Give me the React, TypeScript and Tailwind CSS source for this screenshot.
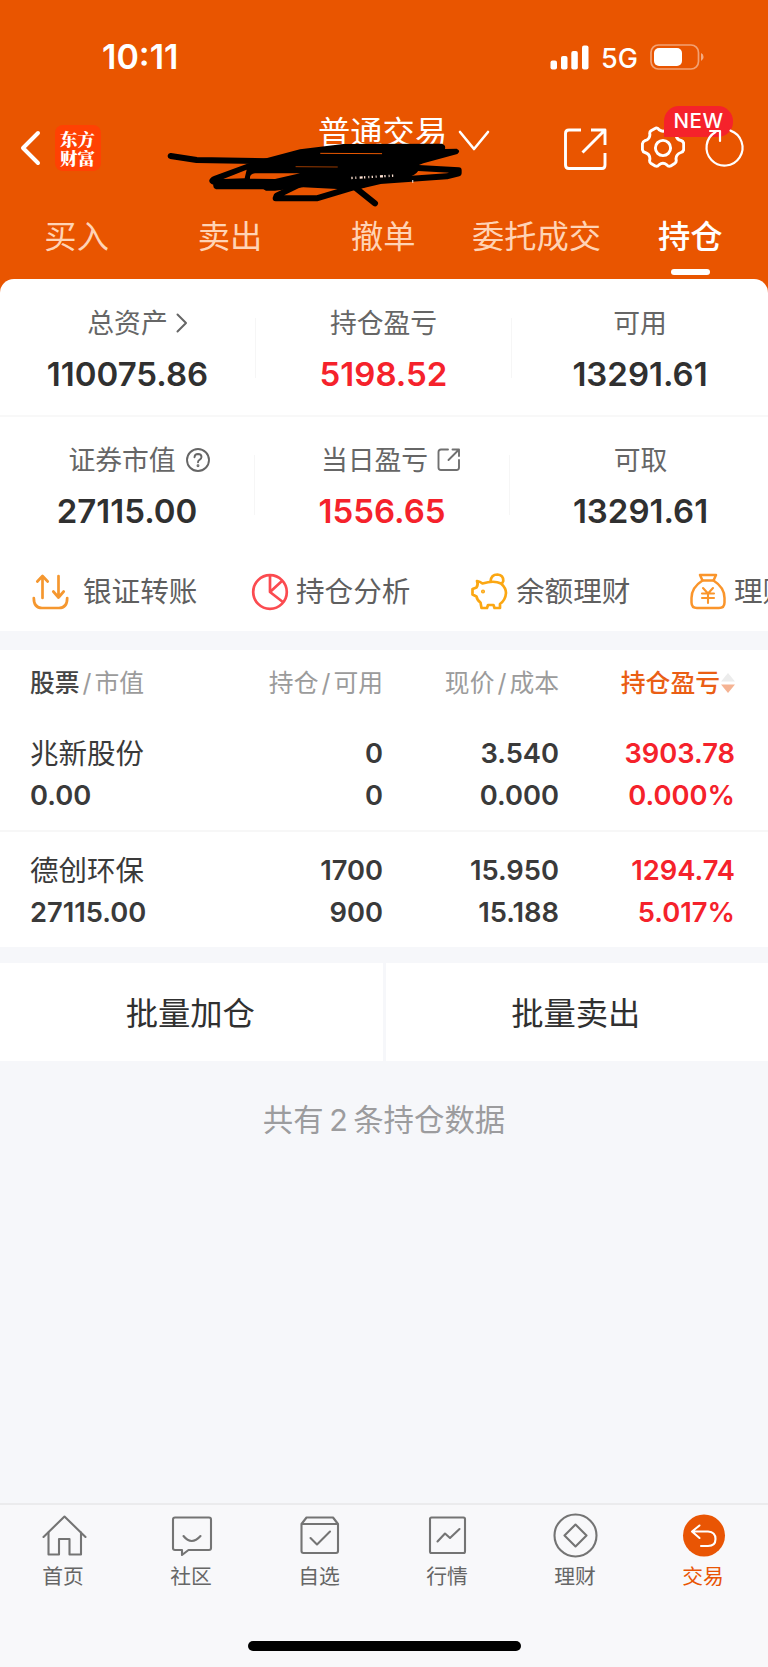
import type { ReactNode } from "react";

const RED = "text-[#f5222b]";

function StatusBar() {
  return (
    <div className="flex h-[114px] items-center justify-between pl-[102px] pr-[64px] text-white">
      <span className="text-[34px] font-semibold leading-none">10:11</span>
      <div className="flex items-center">
        <svg width="39" height="25" viewBox="0 0 39 25" fill="#fff">
          <rect x="0.5" y="15.5" width="6.5" height="9" rx="2" />
          <rect x="11" y="11" width="6.5" height="13.5" rx="2" />
          <rect x="21.3" y="6" width="6.5" height="18.5" rx="2" />
          <rect x="32" y="0.5" width="6.5" height="24" rx="2" />
        </svg>
        <span className="ml-[12px] mt-[2px] w-[37px] text-[27px] font-medium leading-none">5G</span>
        <svg className="ml-[12px]" width="54" height="26" viewBox="0 0 54 26">
          <rect x="1" y="1" width="47.5" height="24" rx="7.5" fill="none" stroke="#fff" strokeOpacity="0.45" strokeWidth="1.7" />
          <rect x="4" y="4" width="28" height="18" rx="5" fill="#fff" />
          <path d="M51 9 q2.6 1.2 2.6 4 t-2.6 4z" fill="#fff" fillOpacity="0.5" />
        </svg>
      </div>
    </div>
  );
}

function Scribble() {
  return (
    <svg className="absolute left-[160px] top-[100px]" width="340" height="120" viewBox="0 0 1020 360" fill="none" stroke="#000" strokeWidth="18" strokeLinecap="round" strokeLinejoin="round">
      <path d="M32 168 L110 180 L330 184" />
      <path
        fill="#000"
        stroke="none"
        fillRule="evenodd"
        d="M148 240 Q152 230 170 225 L270 188 L420 148 L550 132 L846 131 Q858 135 855 147 L890 146 Q904 152 892 162 L790 190 L775 196 V212 Q765 228 740 232 L650 250 L590 270 L430 262 L345 272 L318 272 L310 268 H168 Q158 264 160 254 Q146 250 148 240 Z M190 237 L260 209 L254 235 Z M270 236 Q268 222 285 220 L420 220 L345 237 Z"
      />
      <path d="M762 203 L896 211 L896 220 L860 229 L660 243 L580 262 L470 295 L347 295 L350 287 L430 248" />
      <path d="M585 262 L645 310" />
      <path d="M482 160 L665 161" stroke="#e95800" strokeWidth="3" />
      <path d="M408 200 L532 201" stroke="#b84600" strokeWidth="2.5" />
      <path d="M574 234 L702 227" stroke="#ffe3d4" strokeWidth="7" strokeDasharray="4 8 3 10 9 4 4 9 3 7" strokeLinecap="butt" />
      <path d="M758 240 L758 248" stroke="#fff" strokeOpacity="0.7" strokeWidth="4" strokeLinecap="butt" />
    </svg>
  );
}

function TitleBar() {
  return (
    <div className="flex h-[68px] items-center pl-[20px] pr-[23px]">
      <svg width="22" height="36" viewBox="0 0 22 36" fill="none" stroke="#fff" strokeWidth="4" strokeLinecap="round" strokeLinejoin="round">
        <path d="M18 3 L3 18 L18 33" />
      </svg>
      <div className="ml-[13px] flex h-[46px] w-[46px] items-center justify-center rounded-[8px] bg-[#ff4103]">
        <p className="w-[36px] break-all font-['Noto_Serif_CJK_SC','Noto_Sans_CJK_SC',serif] text-[17.5px] font-black leading-[19px] text-white">东方财富</p>
      </div>
      <div className="ml-[217px] flex items-start">
        <span className="-mt-[31px] text-[32.3px] leading-[40px] text-white">普通交易</span>
        <svg className="-mt-[14px] ml-[11px]" width="32" height="22" viewBox="0 0 32 22" fill="none" stroke="#fff" strokeWidth="2.6" strokeLinecap="round" strokeLinejoin="round">
          <path d="M2 2 L16 19 L30 2" />
        </svg>
      </div>
      <div className="ml-auto flex items-center">
        <svg className="mt-[2px]" width="43" height="43" viewBox="0 0 43 43" fill="none" stroke="#fff" strokeWidth="2.9" strokeLinecap="butt" strokeLinejoin="round">
          <path d="M17 2 H5 Q1.500 2 1.500 5.500 V37 Q1.500 40.500 5 40.500 H38 Q41 40.500 41 37 V25" />
          <path d="M27 2 H41 V17 M41 2 L18.500 24.500" />
        </svg>
        <svg className="ml-[34px]" width="44" height="44" viewBox="0 0 44 44" fill="none" stroke="#fff" strokeWidth="2.9" strokeLinejoin="round">
          <path d="M14.500 2.200 Q16.800 1.400 18.100 3.800 Q22 6.600 26 3.800 Q27.500 1.400 30 2.400 L34 4.800 Q35.800 6.200 35 8.700 Q35.600 13.600 40 14.500 Q42.500 15.300 42.700 17.500 V23.500 Q42.500 25.600 40 26.500 Q34.800 28.400 35 33 Q35.800 35.800 34 37.200 L29.700 40 Q27.400 41 25.800 38.800 Q22 35.600 18 38.800 Q16.500 41 14.200 40 L9.700 37.200 Q8 35.900 8.900 33 Q9 28 4 26.500 Q1.800 25.900 1.400 23.500 V18 Q1.700 15.600 4 14.700 Q8.800 13.300 8.900 8.700 Q8.200 6 10 4.800 Z" />
          <circle cx="22" cy="22" r="7.600" />
        </svg>
        <div className="ml-[20px] w-[40px]" />
      </div>
    </div>
  );
}

function NewBadge() {
  return (
    <>
      <div className="absolute left-[664px] top-[106px] flex h-[31px] w-[69px] items-center justify-center rounded-[15px] rounded-bl-none bg-[#f5222b] text-[20.5px] font-medium leading-none tracking-[0.6px] text-white">
        <span className="-mt-px">NEW</span>
      </div>
      <svg className="absolute left-[704px] top-[125px]" width="42" height="44" viewBox="0 0 42 44" fill="none" stroke="#fff" strokeWidth="2.2" strokeLinecap="round" strokeLinejoin="round">
        <path d="M26.500 5.600 A18 18 0 1 1 11.500 7" />
        <path d="M6 6 H16 V16" />
      </svg>
    </>
  );
}

function Tabs() {
  const tabs = ["买入", "卖出", "撤单", "委托成交"];
  return (
    <nav className="flex h-[97px] pt-[35px] text-[32.3px] leading-[40px] text-[#ffd3b5]">
      {tabs.map((t) => (
        <span key={t} className="w-[153.300px] text-center">{t}</span>
      ))}
      <span className="flex w-[154px] flex-col items-center font-medium text-white">
        持仓
        <span className="mt-[12px] h-[6px] w-[39px] rounded-full bg-white" />
      </span>
    </nav>
  );
}

function Stat({ label, value, icon, red, bordered }: { label: string; value: string; icon?: ReactNode; red?: boolean; bordered?: boolean }) {
  return (
    <div className="flex flex-1">
      <div className="flex flex-1 flex-col items-center">
        <div className="flex h-[40px] items-center text-[26.8px] leading-[40px] text-[#666]">
          {label}
          {icon}
        </div>
        <div className={`mt-[13px] text-[33px] font-semibold leading-[36px] ${red ? RED : "text-[#303030]"}`}>{value}</div>
      </div>
      {bordered && <div className="mt-[15px] h-[60px] w-px bg-[#f6f6f6]" />}
    </div>
  );
}

function Summary() {
  return (
    <section className="bg-white">
      <div className="flex h-[138px] border-b-2 border-[#f8f8f8] pt-[24px]">
        <Stat
          label="总资产"
          value="110075.86"
          bordered
          icon={
            <svg className="-mr-[20px] ml-[8px]" width="12" height="20" viewBox="0 0 12 20" fill="none" stroke="#666" strokeWidth="2" strokeLinecap="round" strokeLinejoin="round">
              <path d="M1.500 1.500 L10 10 L1.500 18.500" />
            </svg>
          }
        />
        <Stat label="持仓盈亏" value="5198.52" red bordered />
        <Stat label="可用" value="13291.61" />
      </div>
      <div className="flex h-[133px] pt-[23px]">
        <Stat
          label="证券市值"
          value="27115.00"
          bordered
          icon={
            <svg className="-mr-[25px] ml-[9px]" width="26" height="26" viewBox="0 0 26 26" fill="none" stroke="#666" strokeWidth="1.9" strokeLinecap="round">
              <circle cx="13" cy="13" r="11" />
              <path d="M9.500 10.200 Q9.700 7 13 7 Q16.500 7.200 16.500 10 Q16.500 11.700 14.500 12.800 Q13 13.700 13 15.300" />
              <circle cx="13" cy="18.800" r="0.500" fill="#666" />
            </svg>
          }
        />
        <Stat
          label="当日盈亏"
          value="1556.65"
          red
          bordered
          icon={
            <svg className="-mr-[18px] ml-[9px]" width="24" height="24" viewBox="0 0 24 24" fill="none" stroke="#707070" strokeWidth="1.900" strokeLinecap="round" strokeLinejoin="round">
              <path d="M11 1.500 H4 Q1.500 1.500 1.500 4 V19.500 Q1.500 22 4 22 H19.500 Q22 22 22 19.500 V12" />
              <path d="M15.500 1.500 H22 V8 M21.500 2 L11.500 12" />
            </svg>
          }
        />
        <div className="flex flex-1 pl-[3px]">
          <Stat label="可取" value="13291.61" />
        </div>
      </div>
    </section>
  );
}

function QuickActions() {
  const label = "mt-[3px] whitespace-nowrap text-[28.6px] leading-[40px] text-[#5f5f5f]";
  return (
    <section className="flex h-[81px] items-center overflow-hidden bg-white">
      <div className="flex w-[220px] shrink-0 items-center pl-[32px]">
        <svg className="mt-[2px]" width="37" height="36" viewBox="0 0 37 36" fill="none" stroke="#f5972f" strokeWidth="2.7" strokeLinecap="round" strokeLinejoin="round">
          <path d="M10.500 24 V2.500 M5.300 7.500 L10.500 2 L15.700 7.500" />
          <path d="M26.500 2 V23 M21.300 17.500 L26.500 23.500 L31.700 17.500" />
          <path d="M1.800 24 Q1.800 34 10 34 H27 Q35.200 34 35.200 24" />
        </svg>
        <span className={`ml-[14px] ${label}`}>银证转账</span>
      </div>
      <div className="flex w-[220px] shrink-0 items-center pl-[31px]">
        <svg className="mt-[2px]" width="38" height="38" viewBox="0 0 38 38" fill="none" stroke="#fb4b50" strokeWidth="2.700" strokeLinejoin="round">
          <circle cx="19" cy="19" r="16.800" />
          <path d="M19 2.200 V19 L31.500 7.500 M19 19 L32.500 29.500" />
        </svg>
        <span className={`ml-[7px] ${label}`}>持仓分析</span>
      </div>
      <div className="flex w-[220px] shrink-0 items-center pl-[31px]">
        <svg className="mt-[2px]" width="37" height="37" viewBox="0 0 37 37" fill="none" stroke="#fba713" strokeWidth="2.700" strokeLinejoin="round">
          <path d="M6 8 Q9 8.500 11.500 10.500 Q23 7 30 10.500 Q35 15 35 20 Q34.500 27 29 31 V35 H23.500 L22.500 32 H17 L16 35 H10.500 L9.500 29.500 Q6 27 5.500 23.500 L1.500 21.500 V16 L5.500 14.500 Q7.500 11.500 6 8 Z" />
          <path d="M19.500 8.500 Q20 1.500 26.500 1.500 Q32.500 2 32.300 8 L30.500 11.500" />
          <circle cx="12" cy="18.500" r="0.700" fill="#fba713" />
        </svg>
        <span className={`ml-[8px] ${label}`}>余额理财</span>
      </div>
      <div className="flex shrink-0 items-center pl-[30px]">
        <svg className="mt-[2px]" width="36" height="37" viewBox="0 0 36 37" fill="none" stroke="#fa952b" strokeWidth="2.500" strokeLinecap="round" strokeLinejoin="round">
          <path d="M10 2 H26 L23.500 7.500 H12.500 Z" />
          <path d="M12.500 7.500 Q1.500 14.500 1.500 25 V29.500 Q1.500 35 7 35 H29 Q34.500 35 34.500 29.500 V25 Q34.500 14.500 23.500 7.500" />
          <path d="M13 15 L18 20.500 L23 15 M12 20.500 H24 M12 25 H24 M18 20.500 V30" strokeWidth="2.1" />
        </svg>
        <span className={`ml-[8px] ${label}`}>理财</span>
      </div>
    </section>
  );
}

const COLS = "grid grid-cols-[170px_183px_176px_176px] pl-[30px] pr-[33px]";

function Holding({ cells, bordered }: { cells: [string, string][]; bordered?: boolean }) {
  return (
    <div className={`${COLS} ${bordered ? "h-[118px] border-b-2 border-[#f7f7f7] pt-[19px]" : "h-[115px] pt-[18px]"} text-[27.3px] font-semibold leading-[42px] text-[#3a3a3a]`}>
      {cells.map(([a, b], i) => (
        <div key={i} className={`flex flex-col whitespace-nowrap ${i ? "items-end" : ""} ${i === 3 ? RED : ""}`}>
          <span className={i === 0 ? "text-[28.500px] font-normal" : ""}>{a}</span>
          <span>{b}</span>
        </div>
      ))}
    </div>
  );
}

function Holdings() {
  return (
    <section className="bg-white">
      <div className={`${COLS} h-[64px] items-center pt-px text-[24.800px] leading-[36px] text-[#9b9b9b]`}>
        <span className="flex gap-[3px]"><b className="font-medium text-[#444]">股票</b><i className="not-italic">/</i>市值</span>
        <span className="flex justify-end gap-[3px]">持仓<i className="not-italic">/</i>可用</span>
        <span className="flex justify-end gap-[3px]">现价<i className="not-italic">/</i>成本</span>
        <span className="flex items-center justify-end font-medium text-[#ea5e14]">
          持仓盈亏
          <svg className="ml-[1px]" width="14" height="20" viewBox="0 0 14 20">
            <path d="M7 0 L14 8.500 H0 Z" fill="#ececec" />
            <path d="M7 20 L14 11.500 H0 Z" fill="#f5b393" />
          </svg>
        </span>
      </div>
      <Holding bordered cells={[["兆新股份", "0.00"], ["0", "0"], ["3.540", "0.000"], ["3903.78", "0.000%"]]} />
      <Holding cells={[["德创环保", "27115.00"], ["1700", "900"], ["15.950", "15.188"], ["1294.74", "5.017%"]]} />
    </section>
  );
}

function BatchButtons() {
  return (
    <div className="mt-[16px] flex h-[98px] gap-[3px] text-[32.3px] text-[#303030]">
      <button className="flex flex-1 items-center justify-center bg-white pr-[2px] pt-[4px]">批量加仓</button>
      <button className="flex flex-1 items-center justify-center bg-white pr-[2px] pt-[4px]">批量卖出</button>
    </div>
  );
}

function TabBar() {
  const items: { label: string; icon: ReactNode; active?: boolean }[] = [
    { label: "首页", icon: <><path d="M2.500 24 L23.500 3.500 L44.500 24" /><path d="M7.500 19.500 V41.500 H18 V26 H28.500 V41.500 H40 V19.500" /></> },
    { label: "社区", icon: <><path d="M6 4.500 H40 Q42 4.500 42 6.500 V35 Q42 37 40 37 H19.500 L13 42 V37 H6 Q4 37 4 35 V6.500 Q4 4.500 6 4.500 Z" /><path d="M14.500 23 Q22.500 33 31.500 23" /></> },
    { label: "自选", icon: <><path d="M4.500 11 V38 Q4.500 40 6.500 40 H39 Q41 40 41 38 V11 L36 4.500 H9.500 Z M4.500 11 H41" /><path d="M13.500 25 L20 31.500 L33 18.500" /></> },
    { label: "行情", icon: <><rect x="5" y="4.500" width="35" height="35.500" rx="1.500" /><path d="M12.500 28.500 L20 20.500 L25 25 L34.500 16" /></> },
    { label: "理财", icon: <><circle cx="22.500" cy="22.500" r="21" /><path d="M22.500 11.500 L33.500 22.500 L22.500 33.500 L11.500 22.500 Z" /></> },
    { label: "交易", active: true, icon: <><circle cx="23" cy="22.500" r="21" fill="#e95504" stroke="none" /><path d="M18.500 12.500 L11 18.500 L18.500 25 M11.500 18.500 H27 Q34.500 19 34.500 26 Q34.500 33 27 33 H20" stroke="#fff" /></> },
  ];
  return (
    <footer className="mt-auto flex h-[164px] flex-col border-t-2 border-[#ebebed] bg-[#f8f8fa]">
      <div className="flex pt-[8px]">
        {items.map(({ label, icon, active }) => (
          <div key={label} className={`flex w-[128px] flex-col items-center text-[20.800px] leading-[30px] ${active ? "text-[#e95504]" : "text-[#666]"}`}>
            <svg width="46" height="46" viewBox="0 0 46 46" fill="none" stroke="#747474" strokeWidth="2.100" strokeLinecap="round" strokeLinejoin="round">{icon}</svg>
            <span className="mt-[3px] pr-[2px]">{label}</span>
          </div>
        ))}
      </div>
      <div className="mx-auto mb-[16px] mt-auto h-[10px] w-[273px] rounded-full bg-black" />
    </footer>
  );
}

export default function App() {
  return (
    <div className="relative flex h-[1667px] w-[768px] flex-col overflow-hidden bg-[#f6f7fa] font-[Inter,'Noto_Sans_CJK_SC',sans-serif]">
      <header className="-mb-[16px] h-[295px] shrink-0 bg-[#e95500]">
        <StatusBar />
        <TitleBar />
        <Tabs />
      </header>
      <NewBadge />
      <Scribble />
      <main className="relative z-10 overflow-hidden rounded-t-[14px]">
        <Summary />
        <QuickActions />
        <div className="h-[19px] bg-[#f6f7fa]" />
        <Holdings />
        <BatchButtons />
        <p className="mt-[39px] text-center text-[30.400px] leading-[40px] tracking-normal text-[#9c9c9e] [word-spacing:-3px]">共有 2 条持仓数据</p>
      </main>
      <TabBar />
    </div>
  );
}
